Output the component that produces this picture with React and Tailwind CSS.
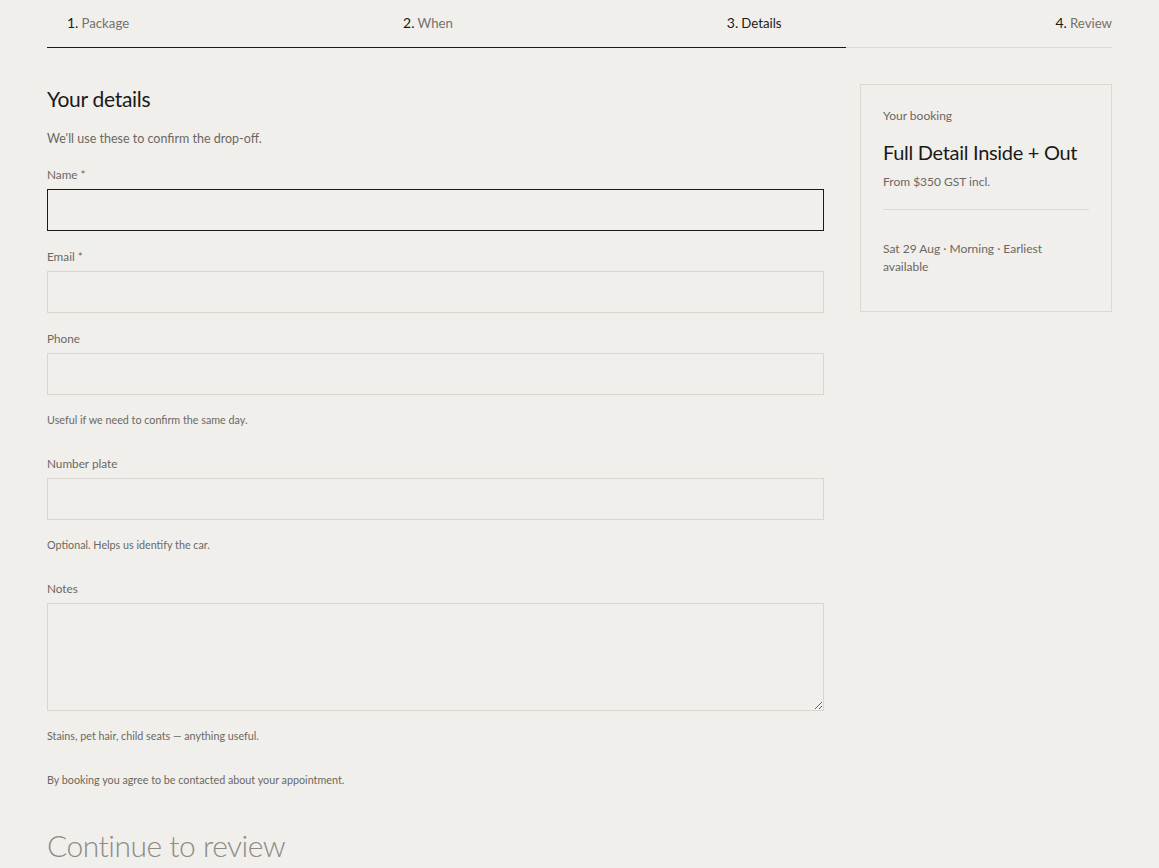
import React from "react";

const font = { fontFamily: "Lato, 'Open Sans', sans-serif" };

function Field({ label, help, tall, focused }) {
  return (
    <div className="flex flex-col">
      <label className="text-[11.75px] leading-[14px] text-[#6b6863] mb-[7px]">{label}</label>
      {tall ? (
        <textarea className="h-[108px] w-full border border-[#d9d6d1] bg-transparent resize-y outline-none" />
      ) : (
        <input
          className={
            "h-[42px] w-full bg-transparent outline-none border " +
            (focused ? "border-[#1a1a1a]" : "border-[#d9d6d1]")
          }
        />
      )}
      {help && <p className="mt-[18px] text-[10.75px] leading-[13px] text-[#6b6863]">{help}</p>}
    </div>
  );
}

export default function App() {
  const steps = [
    { n: "1.", t: "Package", active: false },
    { n: "2.", t: "When", active: false },
    { n: "3.", t: "Details", active: true },
    { n: "4.", t: "Review", active: false },
  ];
  return (
    <div className="min-h-[868px] w-full bg-[#f1efeb]" style={font}>
      <div className="mx-[47px]">
        <div className="flex justify-between pl-5 pt-[14px] pb-[15px]">
          {steps.map((s) => (
            <div key={s.n} className="flex items-baseline gap-[3px]">
              <span className="text-[14px] leading-[18px] text-[#1a1a1a]">{s.n}</span>
              <span className={"text-[13.25px] leading-[18px] " + (s.active ? "text-[#1a1a1a]" : "text-[#75716b]")}>{s.t}</span>
            </div>
          ))}
        </div>
        <div className="flex h-px">
          <div className="w-3/4 bg-[#1a1a1a]" />
          <div className="w-1/4 bg-[#dcd9d4]" />
        </div>

        <div className="flex gap-[36px] mt-[36px]">
          <div className="w-[777px] flex flex-col">
            <h1 className="mt-[2px] text-[21px] leading-[26px] text-[#1a1a1a] tracking-[-0.3px]">Your details</h1>
            <p className="mt-[19px] text-[12.5px] leading-[16px] text-[#6b6863]">We'll use these to confirm the drop-off.</p>

            <div className="mt-[21px]">
              <Field label="Name *" focused />
            </div>
            <div className="mt-[19px]">
              <Field label="Email *" />
            </div>
            <div className="mt-[19px]">
              <Field label="Phone" help="Useful if we need to confirm the same day." />
            </div>
            <div className="mt-[31px]">
              <Field label="Number plate" help="Optional. Helps us identify the car." />
            </div>
            <div className="mt-[31px]">
              <Field label="Notes" tall help="Stains, pet hair, child seats — anything useful." />
            </div>

            <p className="mt-[31px] text-[10.75px] leading-[13px] text-[#6b6863]">By booking you agree to be contacted about your appointment.</p>

            <button className="mt-[41px] self-start text-[30px] leading-[36px] text-[#8e8b86] tracking-[-0.5px] font-light">Continue to review</button>
          </div>

          <aside className="w-[252px] self-start border border-[#dcd9d4] px-[22px] pt-[23px] pb-[35px]">
            <p className="text-[12px] leading-[16px] text-[#6b6863]">Your booking</p>
            <h2 className="mt-[16px] text-[20px] leading-[24px] text-[#1a1a1a] tracking-[-0.3px]">Full Detail Inside + Out</h2>
            <p className="mt-[10px] text-[12px] leading-[16px] text-[#6b6863]">From $350 GST incl.</p>
            <div className="mt-[19px] h-px bg-[#dcd9d4]" />
            <p className="mt-[30px] text-[12px] leading-[18px] text-[#6b6863]">Sat 29 Aug · Morning · Earliest available</p>
          </aside>
        </div>
      </div>
    </div>
  );
}
